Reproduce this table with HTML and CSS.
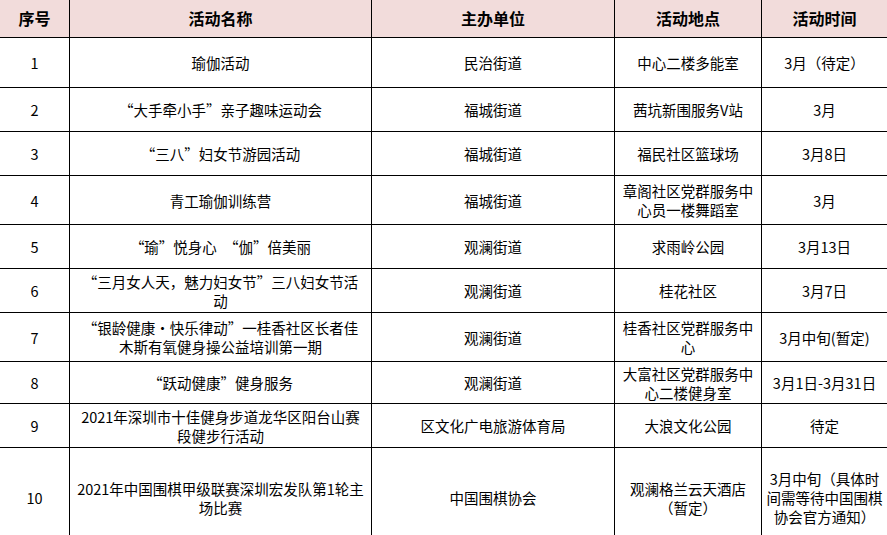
FILE: index.html
```html
<!DOCTYPE html>
<html lang="zh-CN">
<head>
<meta charset="utf-8">
<title>活动安排表</title>
<link rel="stylesheet" href="styles.css">
</head>
<body>
<div class="sheet">
  <div class="cell head">序号</div>
  <div class="cell head">活动名称</div>
  <div class="cell head">主办单位</div>
  <div class="cell head">活动地点</div>
  <div class="cell head">活动时间</div>

  <div class="cell">1</div>
  <div class="cell">瑜伽活动</div>
  <div class="cell">民治街道</div>
  <div class="cell">中心二楼多能室</div>
  <div class="cell">3月（待定）</div>

  <div class="cell">2</div>
  <div class="cell">“大手牵小手”亲子趣味运动会</div>
  <div class="cell">福城街道</div>
  <div class="cell">茜坑新围服务V站</div>
  <div class="cell">3月</div>

  <div class="cell">3</div>
  <div class="cell">“三八”妇女节游园活动</div>
  <div class="cell">福城街道</div>
  <div class="cell">福民社区篮球场</div>
  <div class="cell">3月8日</div>

  <div class="cell">4</div>
  <div class="cell">青工瑜伽训练营</div>
  <div class="cell">福城街道</div>
  <div class="cell">章阁社区党群服务中<br>心员一楼舞蹈室</div>
  <div class="cell">3月</div>

  <div class="cell">5</div>
  <div class="cell">“瑜”悦身心　“伽”倍美丽</div>
  <div class="cell">观澜街道</div>
  <div class="cell">求雨岭公园</div>
  <div class="cell">3月13日</div>

  <div class="cell">6</div>
  <div class="cell">“三月女人天，魅力妇女节”三八妇女节活<br>动</div>
  <div class="cell">观澜街道</div>
  <div class="cell">桂花社区</div>
  <div class="cell">3月7日</div>

  <div class="cell">7</div>
  <div class="cell">“银龄健康·快乐律动”一桂香社区长者佳<br>木斯有氧健身操公益培训第一期</div>
  <div class="cell">观澜街道</div>
  <div class="cell">桂香社区党群服务中<br>心</div>
  <div class="cell">3月中旬(暂定)</div>

  <div class="cell">8</div>
  <div class="cell">“跃动健康”健身服务</div>
  <div class="cell">观澜街道</div>
  <div class="cell">大富社区党群服务中<br>心二楼健身室</div>
  <div class="cell">3月1日-3月31日</div>

  <div class="cell">9</div>
  <div class="cell">2021年深圳市十佳健身步道龙华区阳台山赛<br>段健步行活动</div>
  <div class="cell">区文化广电旅游体育局</div>
  <div class="cell">大浪文化公园</div>
  <div class="cell">待定</div>

  <div class="cell">10</div>
  <div class="cell">2021年中国围棋甲级联赛深圳宏发队第1轮主<br>场比赛</div>
  <div class="cell">中国围棋协会</div>
  <div class="cell">观澜格兰云天酒店<br>（暂定）</div>
  <div class="cell">3月中旬（具体时<br>间需等待中国围棋<br>协会官方通知）</div>
</div>
</body>
</html>
```

FILE: styles.css
```css
html, body {
  margin: 0;
  padding: 0;
  background: #ffffff;
}

body {
  font-family: "Noto Sans CJK SC", "Liberation Sans", sans-serif;
  font-size: 14.5px;
  color: #000000;
  overflow: hidden;
}

.sheet {
  display: grid;
  grid-template-columns: 70px 302px 243px 147px 126px;
  grid-template-rows: 38px 50px 44px 44px 49px 44px 44px 49px 42px 44px 100px;
  width: 888px;
}

.cell {
  box-sizing: border-box;
  border-right: 1px solid #000;
  border-bottom: 1px solid #000;
  display: flex;
  align-items: center;
  justify-content: center;
  text-align: center;
  line-height: 19px;
  white-space: nowrap;
  padding: 0 2px;
}

.head {
  background: #f2dcdb;
  font-size: 16px;
  font-weight: 700;
}
```
